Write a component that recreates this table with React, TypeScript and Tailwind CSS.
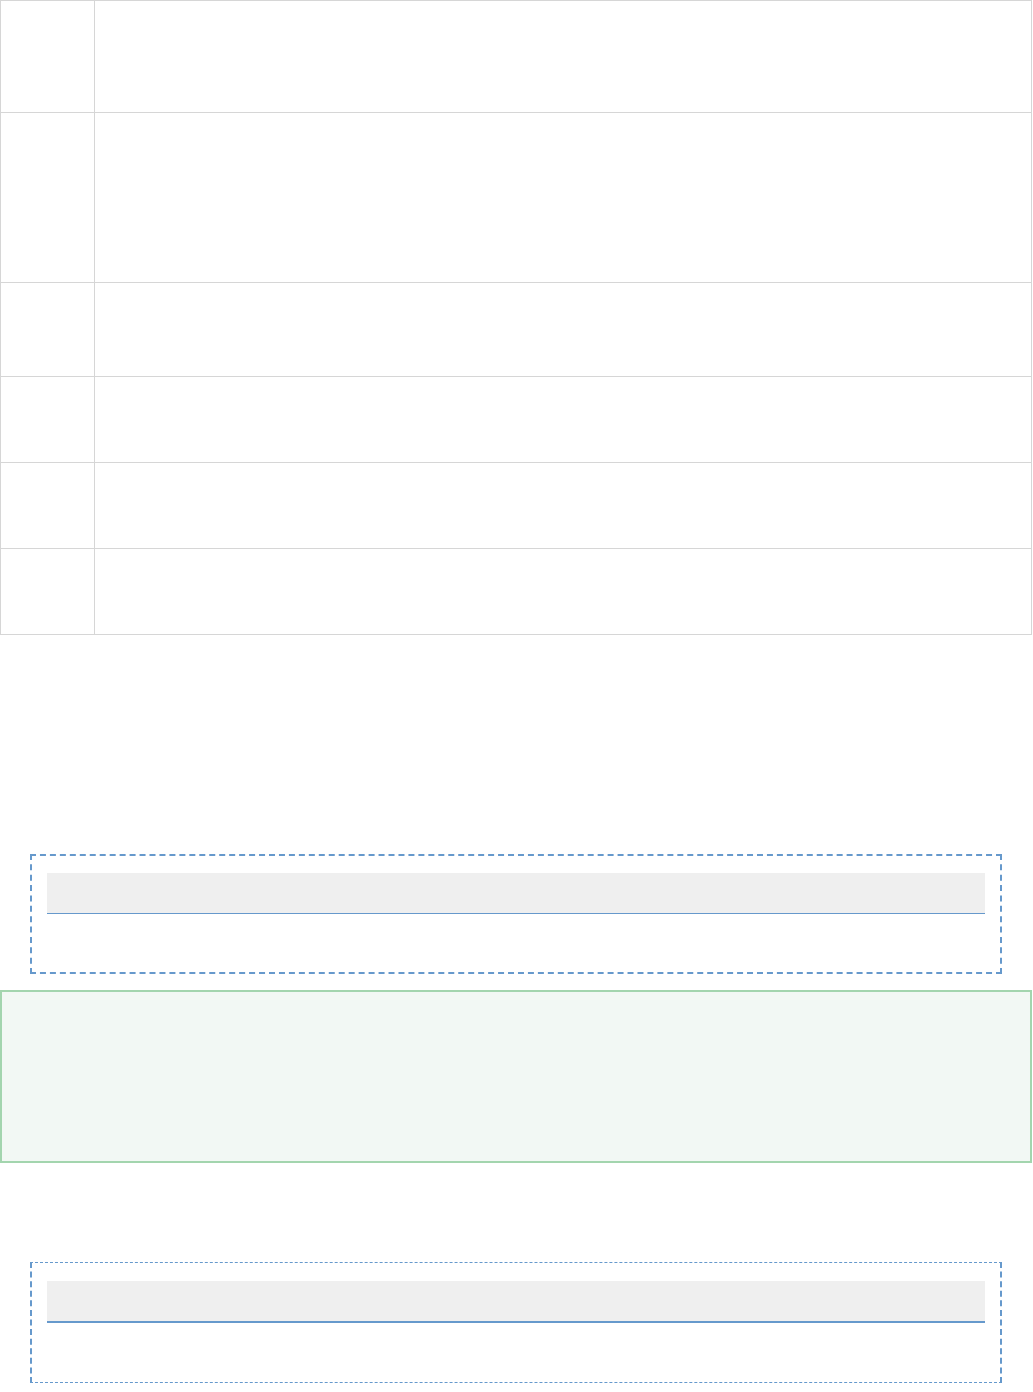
export default function App() {
  const rows = ['h-[112px]', 'h-[170px]', 'h-[94px]', 'h-[86px]', 'h-[86px]', 'h-[86px]'];

  return (
    <div className="min-h-screen bg-white font-['Liberation_Sans',sans-serif]">
      {/* empty table */}
      <div className="w-[1032px] border-x border-t border-[#d6d6d6]">
        {rows.map((h, i) => (
          <div key={i} className={`flex border-b border-[#d6d6d6] ${h}`}>
            <div className="w-[94px] shrink-0 border-r border-[#d6d6d6]" />
            <div className="flex-1" />
          </div>
        ))}
      </div>

      {/* first dashed panel */}
      <div className="mt-[219px] ml-[30px] w-[972px] h-[120px] border-2 border-dashed border-[#6699cc] px-[15px] pt-[17px]">
        <div className="h-[41px] bg-[#efefef] border-b border-[#6699cc]" />
      </div>

      {/* green note */}
      <div className="mt-[16px] w-[1032px] h-[173px] border-2 border-[#a3d5ae] bg-[#f2f8f4]" />

      {/* second dashed panel */}
      <div className="mt-[99px] ml-[30px] w-[972px] h-[121px] border-x-2 border-y border-dashed border-[#6699cc] px-[15px] pt-[18px]">
        <div className="h-[42px] bg-[#efefef] border-b-2 border-[#6699cc]" />
      </div>
    </div>
  );
}
